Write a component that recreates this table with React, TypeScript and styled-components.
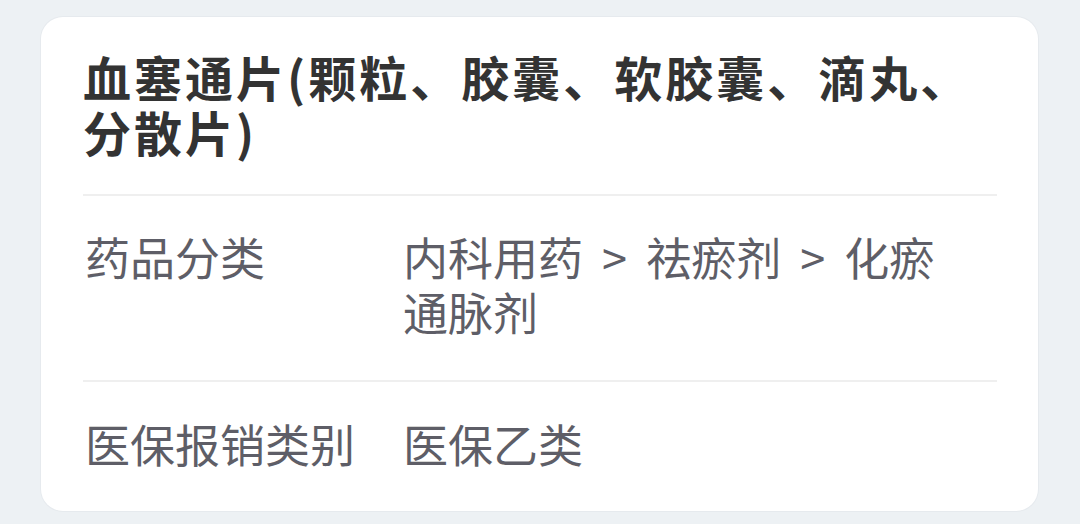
import styled, { createGlobalStyle } from "styled-components";

const GlobalStyle = createGlobalStyle`
    body {
        margin: 0;
        background: #edf1f4;
        font-family: "Noto Sans CJK SC", Roboto, sans-serif;
    }
`;

const Page = styled.div`
    padding: 17px 42px 14px 41px;
`;

const Card = styled.section`
    background: #ffffff;
    border-radius: 22px;
    box-shadow: 0 0 0 1px #e6eaee;
    padding: 0 41px 0 42px;
`;

const Title = styled.h1`
    margin: 0;
    padding: 32px 0 35px;
    font-size: 48px;
    line-height: 55px;
    letter-spacing: 3px;
    font-weight: 700;
    color: #333333;
    border-bottom: 2px solid #efefef;
`;

const Row = styled.div<{ $last?: boolean }>`
    display: grid;
    grid-template-columns: 320px 1fr;
    padding: ${(p) => (p.$last ? "34px 30px 40px 0" : "33px 30px 41px 0")};
    font-size: 45px;
    line-height: 55px;
    color: #5e5e67;
    border-bottom: ${(p) => (p.$last ? "none" : "2px solid #efefef")};
`;

const Label = styled.div`
    padding-left: 2px;
`;

const Value = styled.div`
    word-spacing: 9px;
`;

const rows = [
    { label: "药品分类", value: "内科用药 > 祛瘀剂 > 化瘀通脉剂" },
    { label: "医保报销类别", value: "医保乙类" },
];

export default function App() {
    return (
        <Page>
            <GlobalStyle />
            <Card>
                <Title>血塞通片(颗粒、胶囊、软胶囊、滴丸、分散片)</Title>
                {rows.map((r, i) => (
                    <Row key={r.label} $last={i === rows.length - 1}>
                        <Label>{r.label}</Label>
                        <Value>{r.value}</Value>
                    </Row>
                ))}
            </Card>
        </Page>
    );
}
